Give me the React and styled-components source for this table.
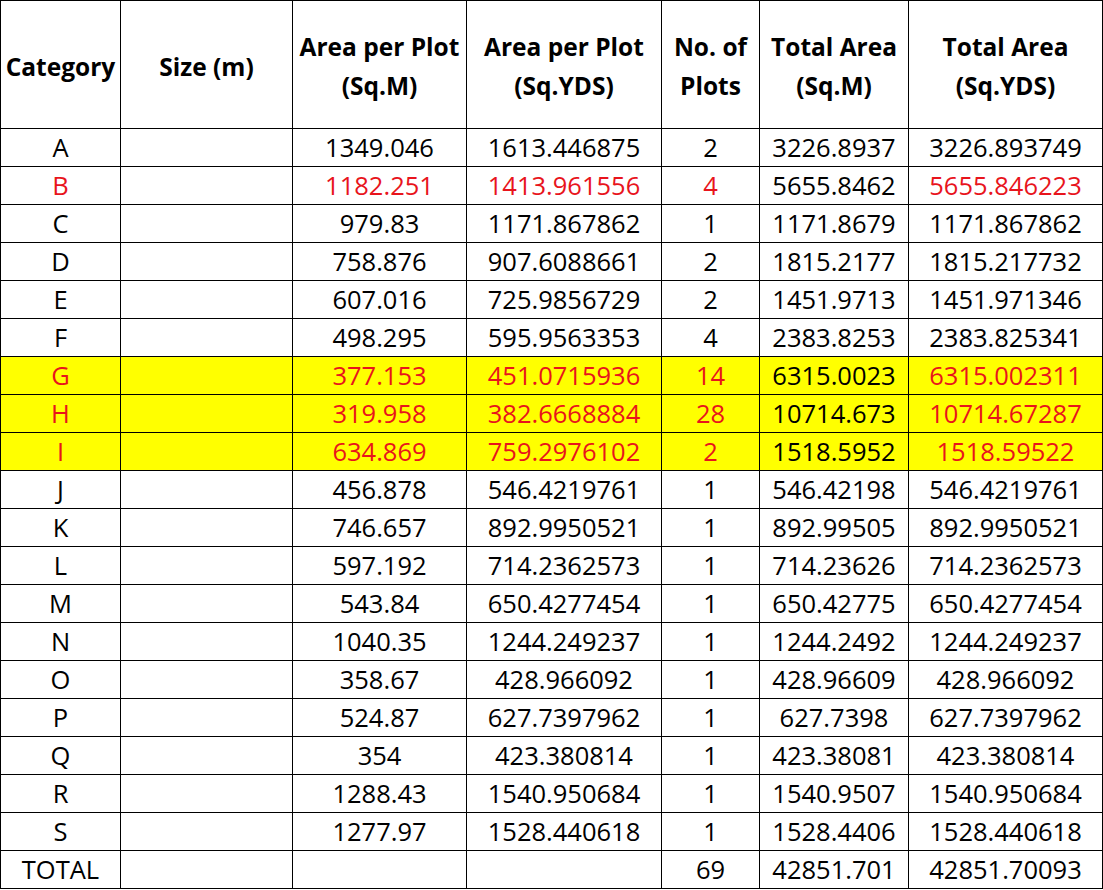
import React from 'react';
import styled, { createGlobalStyle } from 'styled-components';

const GlobalStyle = createGlobalStyle`
  body {
    margin: 0;
    background: #fff;
    font-family: "Open Sans", "Liberation Sans", sans-serif;
  }
`;

const Sheet = styled.table`
  border-collapse: collapse;
  table-layout: fixed;
  width: 1102px;
  color: #000;
  font-size: 25.5px;
`;

const HeadCell = styled.th`
  border: 1px solid #000;
  height: 128px;
  padding: 3px 0 0;
  font-weight: 700;
  font-size: 24.5px;
  line-height: 39px;
  text-align: center;
  vertical-align: middle;
  box-sizing: border-box;
`;

const Row = styled.tr`
  background: ${p => (p.$hl ? '#ffff00' : '#fff')};
`;

const Cell = styled.td`
  border: 1px solid #000;
  height: 37px;
  padding: 0;
  text-align: center;
  vertical-align: middle;
  line-height: 37px;
  white-space: nowrap;
  color: ${p => (p.$red ? '#e8141c' : '#000')};
`;

const widths = [120, 172, 174, 195, 98, 149, 194];

const rows = [
  ['A', '1349.046', '1613.446875', '2', '3226.8937', '3226.893749'],
  ['B', '1182.251', '1413.961556', '4', '5655.8462', '5655.846223', 'red'],
  ['C', '979.83', '1171.867862', '1', '1171.8679', '1171.867862'],
  ['D', '758.876', '907.6088661', '2', '1815.2177', '1815.217732'],
  ['E', '607.016', '725.9856729', '2', '1451.9713', '1451.971346'],
  ['F', '498.295', '595.9563353', '4', '2383.8253', '2383.825341'],
  ['G', '377.153', '451.0715936', '14', '6315.0023', '6315.002311', 'hl'],
  ['H', '319.958', '382.6668884', '28', '10714.673', '10714.67287', 'hl'],
  ['I', '634.869', '759.2976102', '2', '1518.5952', '1518.59522', 'hl'],
  ['J', '456.878', '546.4219761', '1', '546.42198', '546.4219761'],
  ['K', '746.657', '892.9950521', '1', '892.99505', '892.9950521'],
  ['L', '597.192', '714.2362573', '1', '714.23626', '714.2362573'],
  ['M', '543.84', '650.4277454', '1', '650.42775', '650.4277454'],
  ['N', '1040.35', '1244.249237', '1', '1244.2492', '1244.249237'],
  ['O', '358.67', '428.966092', '1', '428.96609', '428.966092'],
  ['P', '524.87', '627.7397962', '1', '627.7398', '627.7397962'],
  ['Q', '354', '423.380814', '1', '423.38081', '423.380814'],
  ['R', '1288.43', '1540.950684', '1', '1540.9507', '1540.950684'],
  ['S', '1277.97', '1528.440618', '1', '1528.4406', '1528.440618'],
  ['TOTAL', '', '', '69', '42851.701', '42851.70093'],
];

export default function App() {
  return (
    <>
      <GlobalStyle />
      <Sheet>
        <colgroup>
          {widths.map((w, i) => (
            <col key={i} style={{ width: w }} />
          ))}
        </colgroup>
        <thead>
          <tr>
            <HeadCell>Category</HeadCell>
            <HeadCell>Size (m)</HeadCell>
            <HeadCell>Area per Plot<br />(Sq.M)</HeadCell>
            <HeadCell>Area per Plot<br />(Sq.YDS)</HeadCell>
            <HeadCell>No. of<br />Plots</HeadCell>
            <HeadCell>Total Area<br />(Sq.M)</HeadCell>
            <HeadCell>Total Area<br />(Sq.YDS)</HeadCell>
          </tr>
        </thead>
        <tbody>
          {rows.map(([cat, a, b, n, t1, t2, mark]) => {
            const red = mark === 'red' || mark === 'hl';
            return (
              <Row key={cat} $hl={mark === 'hl'}>
                <Cell $red={red}>{cat}</Cell>
                <Cell />
                <Cell $red={red}>{a}</Cell>
                <Cell $red={red}>{b}</Cell>
                <Cell $red={red}>{n}</Cell>
                <Cell>{t1}</Cell>
                <Cell $red={red}>{t2}</Cell>
              </Row>
            );
          })}
        </tbody>
      </Sheet>
    </>
  );
}
